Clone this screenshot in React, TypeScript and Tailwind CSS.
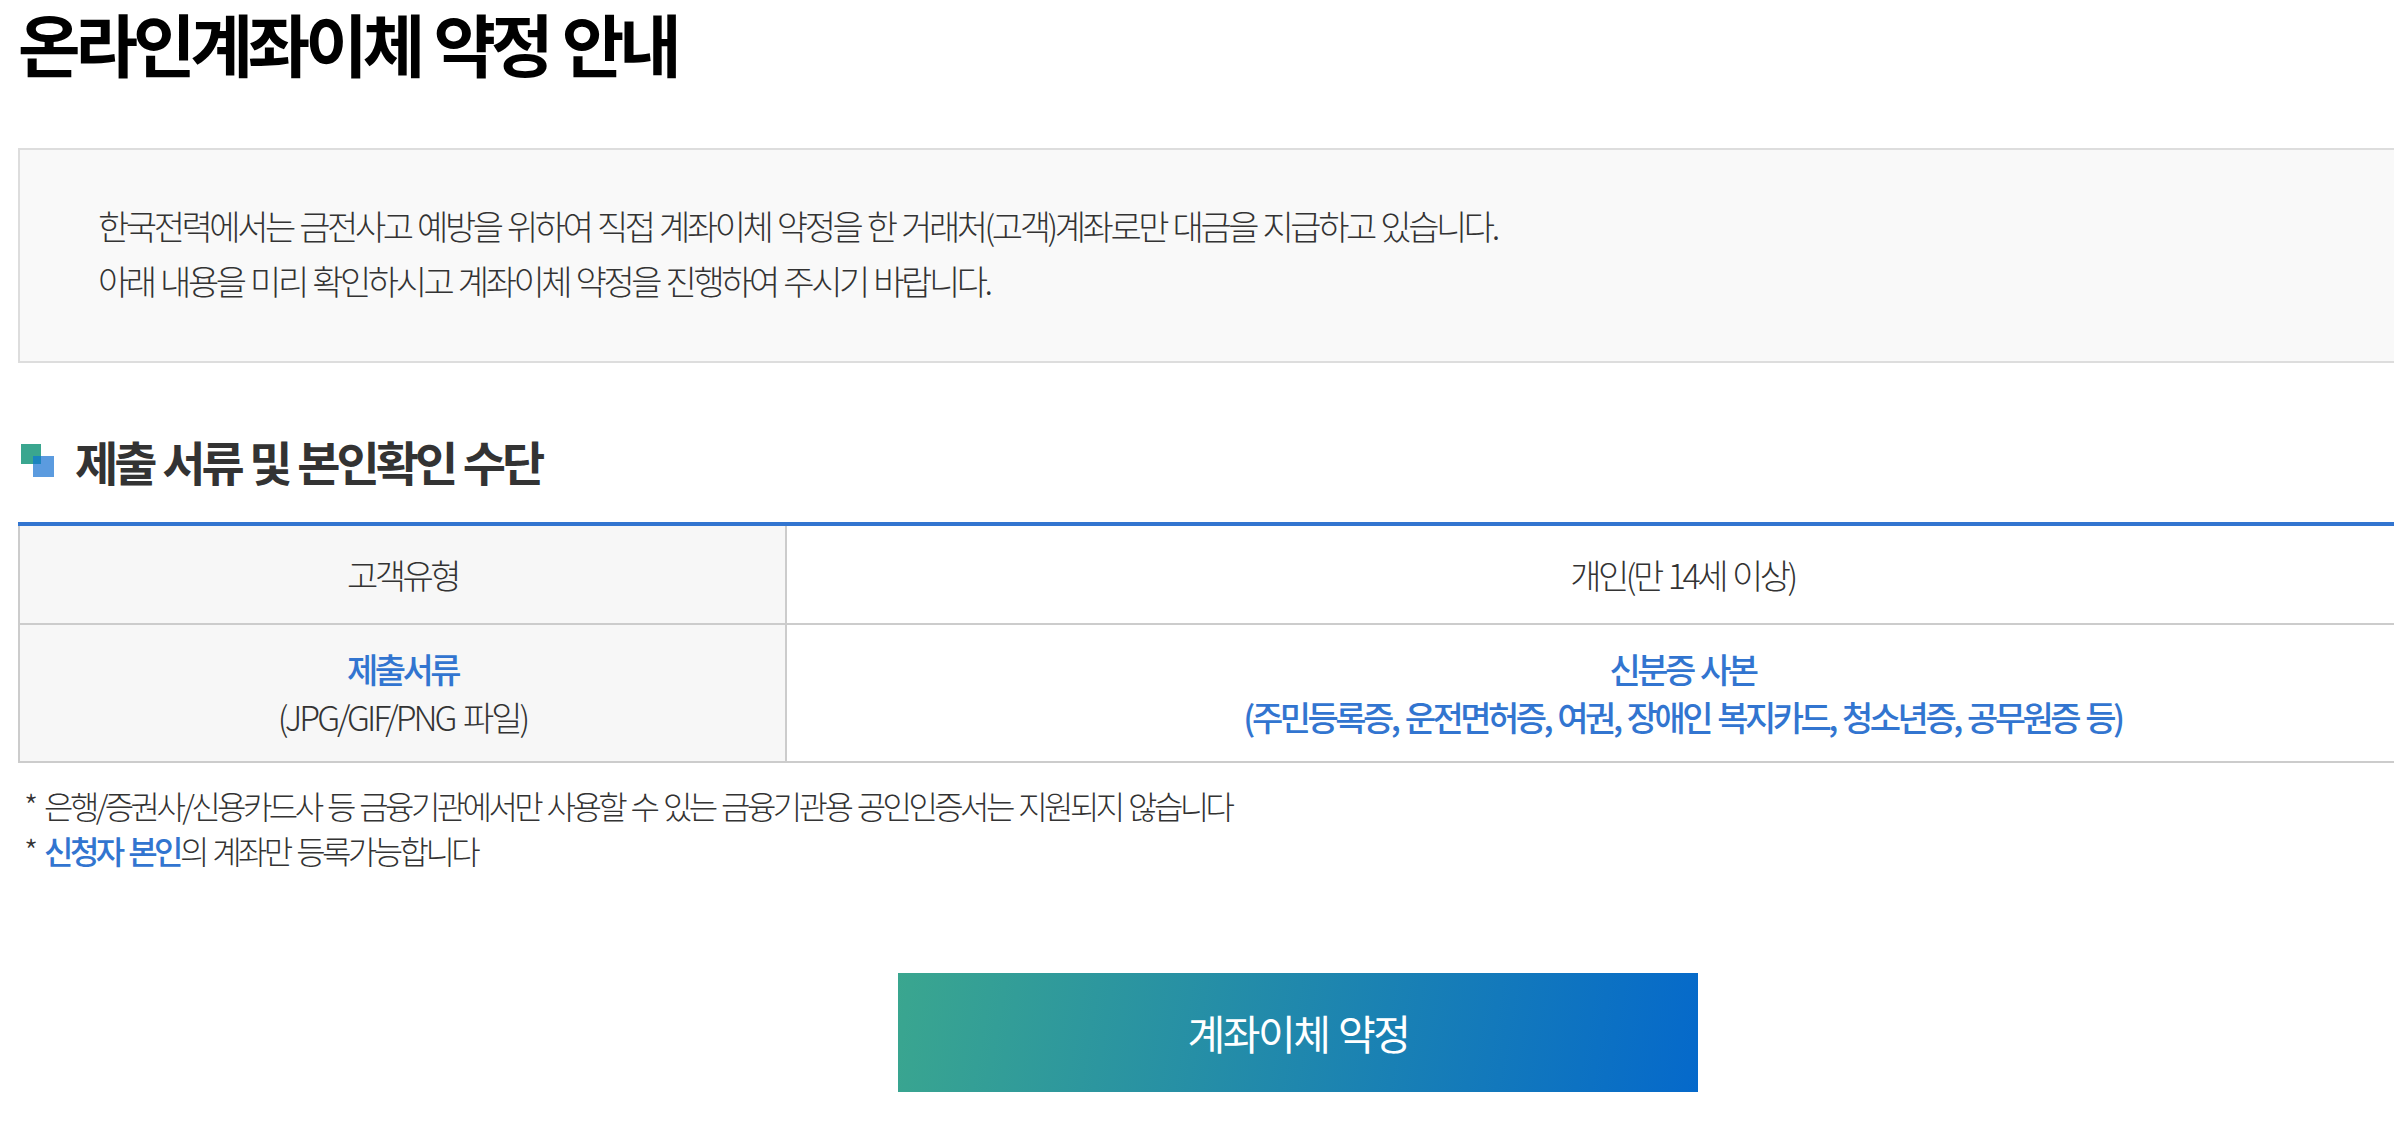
const font = '[font-family:"Noto_Sans_CJK_KR","Noto_Sans",sans-serif]';

export default function App() {
  return (
    <div className={`h-screen overflow-hidden bg-white ${font}`}>
      <div className="ml-[18px] w-[2560px]">
        <h1 className="h-[148px] text-[68px] leading-[85px] font-bold tracking-[-5.1px] [word-spacing:3px] text-black">
          온라인계좌이체 약정 안내
        </h1>

        {/* 안내 박스 */}
        <div className="h-[215px] border-2 border-[#dddddd] bg-[#f9f9f9] pt-[48px] pl-[78px] text-[34px] leading-[55px] font-light tracking-[-3.45px] [word-spacing:2.4px] text-[#333333]">
          <p>한국전력에서는 금전사고 예방을 위하여 직접 계좌이체 약정을 한 거래처(고객)계좌로만 대금을 지급하고 있습니다.</p>
          <p>아래 내용을 미리 확인하시고 계좌이체 약정을 진행하여 주시기 바랍니다.</p>
        </div>

        {/* 섹션 제목 */}
        <div className="mt-[70px] flex h-[56px] items-center gap-[20px] pl-[3px]">
          <svg width="34" height="34" viewBox="0 0 34 34" className="mt-[-1px] shrink-0">
            <rect x="0" y="0" width="20" height="20" fill="#3aa68f" />
            <rect x="12" y="12" width="21" height="21" fill="#5b9bdf" />
            <rect x="12" y="12" width="8" height="8" fill="#1a84bf" />
          </svg>
          <h2 className="text-[47px] leading-[56px] font-bold tracking-[-4px] [word-spacing:2px] text-[#333333]">제출 서류 및 본인확인 수단</h2>
        </div>

        {/* 표 */}
        <div className="mt-[33px] border-t-4 border-[#3275d0] text-[34px] font-light tracking-[-3.5px] [word-spacing:3px] text-[#333333]">
          <div className="grid h-[99px] grid-cols-[769px_1fr] border-b-2 border-[#cccccc]">
            <div className="flex items-center justify-center border-x-2 border-[#cccccc] bg-[#f7f7f7]">고객유형</div>
            <div className="flex items-center justify-center">개인(만 14세 이상)</div>
          </div>
          <div className="grid h-[138px] grid-cols-[769px_1fr] border-b-2 border-[#cccccc] leading-[48px]">
            <div className="flex flex-col items-center justify-center border-x-2 border-[#cccccc] bg-[#f7f7f7]">
              <span className="font-medium text-[#3275d0]">제출서류</span>
              <span className="tracking-[-3px] [word-spacing:4px]">(JPG/GIF/PNG 파일)</span>
            </div>
            <div className="flex flex-col items-center justify-center font-medium text-[#3275d0]">
              <span>신분증 사본</span>
              <span>(주민등록증, 운전면허증, 여권, 장애인 복지카드, 청소년증, 공무원증 등)</span>
            </div>
          </div>
        </div>

        {/* 유의사항 */}
        <div className="mt-[20px] pl-[6px] text-[32px] leading-[45px] font-light tracking-[-3.6px] [word-spacing:3px] text-[#333333]">
          <p>
            <span className="mr-[3px]">*</span> 은행/증권사/신용카드사 등 금융기관에서만 사용할 수 있는 금융기관용 공인인증서는 지원되지 않습니다
          </p>
          <p>
            <span className="mr-[3px]">*</span> <span className="font-medium text-[#3275d0]">신청자 본인</span>의 계좌만 등록가능합니다
          </p>
        </div>

        <div className="mt-[100px] flex justify-center">
          <button className="h-[119px] w-[800px] bg-[linear-gradient(100deg,#3aa68f,#0569cb)] text-[41px] font-normal tracking-[-2.5px] [word-spacing:3px] text-white">
            계좌이체 약정
          </button>
        </div>
      </div>
    </div>
  );
}
